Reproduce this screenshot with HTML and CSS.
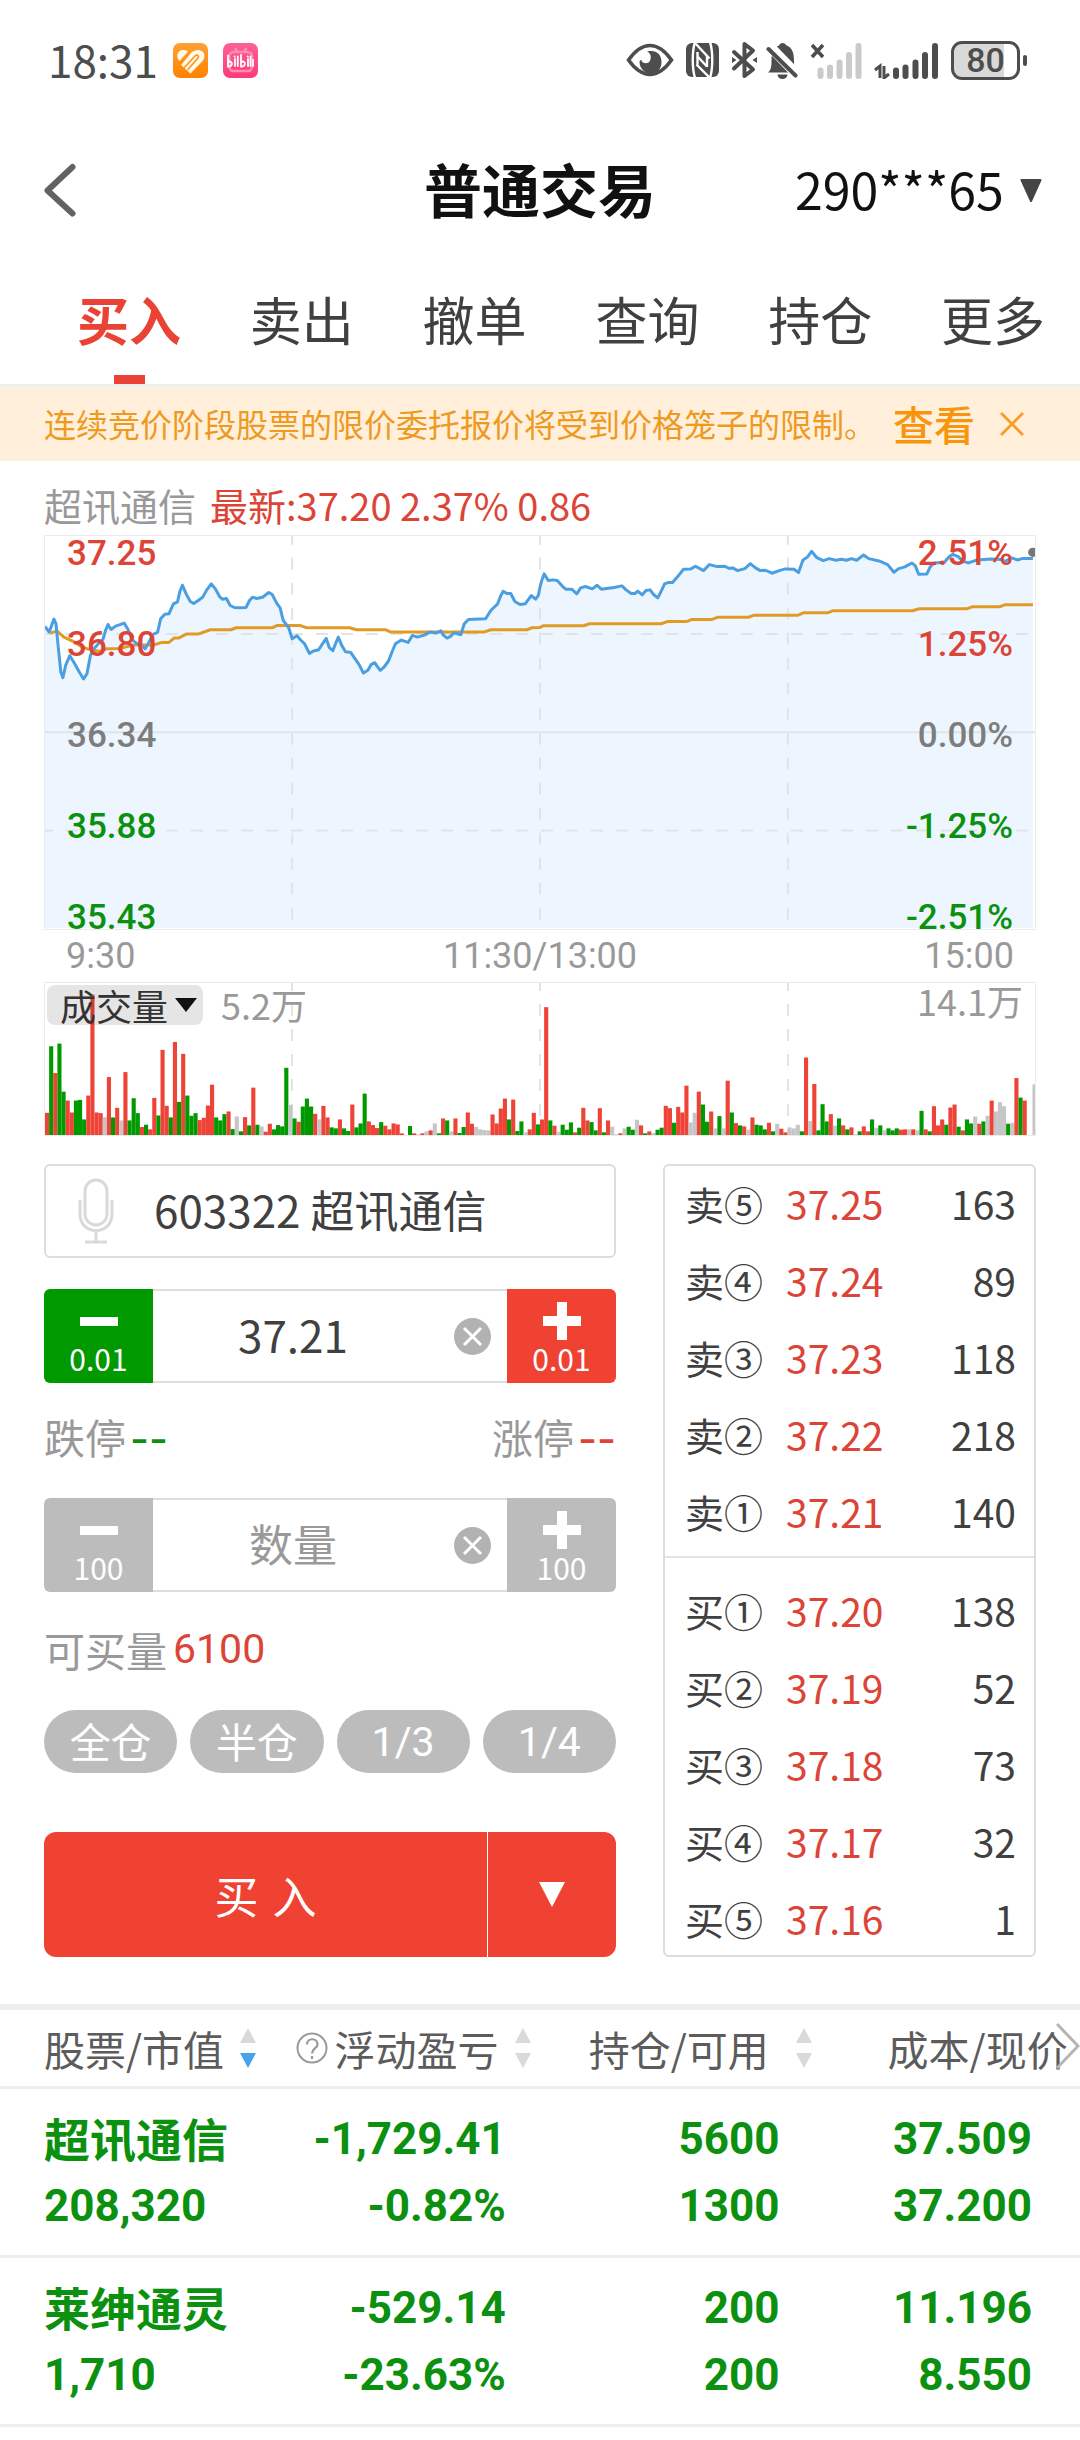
FILE: index.html
```html
<!DOCTYPE html>
<html lang="zh-CN">
<head>
<meta charset="utf-8">
<meta name="viewport" content="width=device-width, initial-scale=1">
<title>普通交易</title>
<link rel="stylesheet" href="styles.css">
</head>
<body>
<div class="statusbar">
  <div class="status-left">
    <time class="clock">18:31</time>
    <svg class="app-icon" viewBox="0 0 35 35" aria-hidden="true">
      <defs><linearGradient id="orange" x1="0" y1="0" x2="0" y2="1"><stop offset="0" stop-color="#ffa033"/><stop offset="1" stop-color="#ff8200"/></linearGradient></defs>
      <rect width="35" height="35" rx="7" fill="url(#orange)"/>
      <path d="M6.500 18C2.500 14 4 7.500 9.500 7C12 6.800 14 7.500 15 8.500Z" fill="#fffbe8"/>
      <path d="M8 22L18.500 9.500C22 6 28 6 30.500 9.500C32 12.500 31.500 15.500 29.500 18L17.500 30.500Z" fill="#fffbe8"/>
      <path d="M10.500 25.500L22 13C24 11 26.500 13 25 15L14.500 27" fill="none" stroke="#ff9418" stroke-width="1.600"/>
    </svg>
    <svg class="app-icon" viewBox="0 0 35 35" aria-hidden="true">
      <defs><linearGradient id="pink" x1="0" y1="0" x2="0" y2="1"><stop offset="0" stop-color="#fc6197"/><stop offset="1" stop-color="#ff3a78"/></linearGradient></defs>
      <rect width="35" height="35" rx="7" fill="url(#pink)"/>
      <g fill="none" stroke="#ff8db2" stroke-width="2.400"><rect x="6.500" y="9" width="22.500" height="19" rx="4"/><path d="M12 5l2.500 4M23.500 5L21 9"/></g>
      <g fill="none" stroke="#fff" stroke-width="1.800" stroke-linecap="round">
        <path d="M5 12.500V23.500C9.500 24 10.500 18.500 6 18.500M12 16v7M14.800 13.500V23M18 12V23.500C22.500 24 23.500 18.500 19 18.500M25 16v7M27.500 13.500V23M30 17v6M11.500 13.500l.2.100M24.700 13.500l.2.100"/>
      </g>
    </svg>
  </div>
  <div class="status-right">
    <svg width="48" height="38" viewBox="0 0 48 38" aria-hidden="true">
      <path d="M2.500 19C10 8.500 17 4.500 24 4.500S38 8.500 45.500 19C38 29.500 31 33.500 24 33.500S10 29.500 2.500 19Z" fill="none" stroke="#4d4d4d" stroke-width="3.600"/>
      <path d="M21 10.500C30 8.500 35.500 13 35.500 21C35.500 28 31 32.500 25 32.500S13.500 28 13.500 20.500C13.500 20 15 18.500 15.500 19C16 23 23 24 24.500 18.500C25.500 14.500 24 12 21 10.500Z" fill="#4d4d4d"/>
    </svg>
    <svg class="icon-nfc" width="33" height="36" viewBox="0 0 33 36" aria-hidden="true">
      <rect y="1" width="33" height="34" rx="6" fill="#4d4d4d"/>
      <g fill="none" stroke="#fff" stroke-width="2.400"><path d="M9 0C6 9 6 26 9 36"/><path d="M24 0C27 9 27 27 24 36"/><path d="M9 1L23.500 16.500M10.500 22.500L23.500 35.500M11.500 10V22.500M21 14V25" /><path d="M11.500 14.500L21 24.500"/></g>
    </svg>
    <svg width="27" height="38" viewBox="0 0 27 38" aria-hidden="true">
      <path d="M3 11L22 28.500L13.500 35V3L22 9.500L3 27.500" fill="none" stroke="#4d4d4d" stroke-width="4" stroke-linejoin="round" stroke-linecap="round"/>
      <path d="M1 16l4.500 3L1 22ZM26 16l-4.500 3L26 22Z" fill="#4d4d4d"/>
    </svg>
    <svg class="icon-bell" width="32" height="38" viewBox="0 0 32 38" aria-hidden="true">
      <path d="M2 31.500C5 29 5.500 26 5.500 20C5.500 9 9 6 13 4.500C14 1 19 1 20.500 4.500C26 6.500 28 11 28 20C28 27 29 29 31 31.500Z" fill="#4d4d4d"/>
      <path d="M11.500 33.500h10a5 4.500 0 0 1-10 0Z" fill="#4d4d4d"/>
      <path d="M0 1.500L31 33.500" stroke="#fff" stroke-width="10"/>
      <path d="M2.500 8L29.500 34.500" stroke="#4d4d4d" stroke-width="4" stroke-linecap="round"/>
    </svg>
    <svg class="icon-nosim" width="52" height="38" viewBox="0 0 52 38" aria-hidden="true">
      <path d="M2 4l11 12M13 4L2 16" stroke="#4d4d4d" stroke-width="3.600"/>
      <path d="M10.500 29.500v5.500M20 26.500v8.500M29.500 21.500v13.500M39 14v21M48.500 5v30" stroke="#cacaca" stroke-width="6" stroke-linecap="round"/>
    </svg>
    <svg class="icon-signal" width="65" height="38" viewBox="0 0 65 38" aria-hidden="true">
      <path d="M1 29l5-4v12M10 25v12l5-4" fill="none" stroke="#4d4d4d" stroke-width="3"/>
      <path d="M22 29.500v5.500M31.500 26.500v8.500M41.500 21.500v13.500M51 14v21M61 5v30" stroke="#4d4d4d" stroke-width="6" stroke-linecap="round"/>
    </svg>
    <div class="battery"><span class="battery-text">80</span></div>
  </div>
</div>

<header class="header">
  <button class="back" type="button" aria-label="返回">
    <svg width="32" height="54" viewBox="0 0 32 54"><path d="M28.500 4L3.500 27.500L28.500 50.500" fill="none" stroke="#626262" stroke-width="6" stroke-linecap="round" stroke-linejoin="round"/></svg>
  </button>
  <h1 class="title">普通交易</h1>
  <div class="account">
    <select class="account-select" aria-label="资金账号"><option>290***65</option></select>
    <svg class="caret" width="22" height="23" viewBox="0 0 22 23" aria-hidden="true"><path d="M1.500 1h19L11 22Z" fill="#444" stroke="#444" stroke-width="2" stroke-linejoin="round"/></svg>
  </div>
</header>

<nav class="tabs">
  <a class="tab tab-active" href="#buy">买入</a>
  <a class="tab" href="#sell">卖出</a>
  <a class="tab" href="#cancel">撤单</a>
  <a class="tab" href="#query">查询</a>
  <a class="tab" href="#hold">持仓</a>
  <a class="tab" href="#more">更多</a>
</nav>

<div class="notice">
  <p class="notice-text">连续竞价阶段股票的限价委托报价将受到价格笼子的限制。</p>
  <a class="notice-link" href="#notice">查看</a>
  <button class="notice-close" type="button" aria-label="关闭">
    <svg width="24" height="24" viewBox="0 0 24 24"><path d="M1 1l22 22M23 1L1 23" stroke="#f6a02a" stroke-width="3"/></svg>
  </button>
</div>

<main>
  <section class="market">
    <p class="quote"><span class="quote-name">超讯通信</span><span class="up">最新:37.20 2.37% 0.86</span></p>

    <div class="price-chart">
      <svg class="plot" viewBox="0 0 2876 1182" preserveAspectRatio="none" aria-label="分时图">
        <g transform="translate(-130 -46)">
          <path id="price-area" fill="#edf6ff"/>
          <g class="grid">
            <path d="M130 636H3006"/>
            <path class="dash" d="M118 341H3006M118 932H3006"/>
            <path class="dash" d="M848 36V1226M1568 36V1226M2288 36V1226"/>
          </g>
          <path id="average-line" class="line" stroke="#e29a26"/>
          <path id="price-line" class="line" stroke="#4b9fe0"/>
          <ellipse cx="3000" cy="95" rx="14" ry="14" fill="#777"/>
        </g>
      </svg>
      <div class="scale">
        <span class="up">37.25</span><span class="up">36.80</span><span class="flat">36.34</span><span class="down">35.88</span><span class="down">35.43</span>
      </div>
      <div class="scale scale-right">
        <span class="up">2.51%</span><span class="up">1.25%</span><span class="flat">0.00%</span><span class="down">-1.25%</span><span class="down">-2.51%</span>
      </div>
    </div>
    <div class="time-axis"><span>9:30</span><span>11:30/13:00</span><span class="time-end">15:00</span></div>

    <div class="volume-chart">
      <div class="volume-head">
        <div class="indicator">
          <select class="indicator-select" aria-label="指标"><option>成交量</option></select>
          <svg class="caret" width="22" height="14" viewBox="0 0 22 14" aria-hidden="true"><path d="M0 0h22L11 14Z" fill="#111"/></svg>
        </div>
        <span class="volume-now">5.2万</span>
        <span class="volume-max">14.1万</span>
      </div>
      <svg class="plot" viewBox="0 0 990 459" preserveAspectRatio="none" aria-label="成交量图">
        <g class="grid"><path class="dash" d="M247 -12V459M495 -12V459M743 -12V459"/></g>
        <g id="volume-bars"></g>
        <path d="M989 306V459" stroke="#c6c6c6" stroke-width="3"/>
      </svg>
    </div>
  </section>

  <div class="trade">
    <form class="order" id="buy">
      <div class="field">
        <svg class="mic" width="36" height="66" viewBox="0 0 36 66" aria-hidden="true"><g fill="none" stroke="#d9d9d9" stroke-width="3"><rect x="7" y="2" width="22" height="45" rx="11"/><path d="M2 22V36C2 58 34 58 34 36V22M18 52V64M7 64H29"/></g></svg>
        <input class="field-input" type="text" aria-label="股票代码" value="603322 超讯通信">
      </div>

      <div class="stepper">
        <button class="step step-down" type="button"><svg width="38" height="38" viewBox="0 0 38 38" aria-hidden="true"><path d="M0 19.500H38" stroke="#fff" stroke-width="9"/></svg>0.01</button>
        <input class="step-input" type="text" aria-label="价格" value="37.21">
        <button class="clear" type="button" aria-label="清除"><svg width="37" height="37" viewBox="0 0 37 37"><circle cx="18.500" cy="18.500" r="18.500" fill="#b2b2b2"/><path d="M10 10l17 17M27 10L10 27" stroke="#fff" stroke-width="3"/></svg></button>
        <button class="step step-up" type="button"><svg width="38" height="38" viewBox="0 0 38 38" aria-hidden="true"><path d="M0 19H38M19 0V38" stroke="#fff" stroke-width="10"/></svg>0.01</button>
      </div>

      <div class="limits">
        <span>跌停<b class="dashes down">--</b></span>
        <span>涨停<b class="dashes up">--</b></span>
      </div>

      <div class="stepper">
        <button class="step" type="button"><svg width="38" height="38" viewBox="0 0 38 38" aria-hidden="true"><path d="M0 19.500H38" stroke="#fff" stroke-width="9"/></svg>100</button>
        <input class="step-input" type="text" aria-label="数量" placeholder="数量">
        <button class="clear" type="button" aria-label="清除"><svg width="37" height="37" viewBox="0 0 37 37"><circle cx="18.500" cy="18.500" r="18.500" fill="#b2b2b2"/><path d="M10 10l17 17M27 10L10 27" stroke="#fff" stroke-width="3"/></svg></button>
        <button class="step" type="button"><svg width="38" height="38" viewBox="0 0 38 38" aria-hidden="true"><path d="M0 19H38M19 0V38" stroke="#fff" stroke-width="10"/></svg>100</button>
      </div>

      <p class="available">可买量<b class="available-num up">6100</b></p>

      <div class="portions">
        <button class="pill" type="button">全仓</button>
        <button class="pill" type="button">半仓</button>
        <button class="pill pill-num" type="button">1/3</button>
        <button class="pill pill-num" type="button">1/4</button>
      </div>

      <div class="submit">
        <button class="submit-main" type="submit">买 入</button>
        <button class="submit-more" type="button" aria-label="更多买入方式"><svg width="26" height="25" viewBox="0 0 26 25"><path d="M0 0H26L13 25Z" fill="#fff"/></svg></button>
      </div>
    </form>

    <section class="book" aria-label="五档行情">
      <ul class="book-side">
        <li><span>卖⑤</span><span class="up">37.25</span><span class="qty">163</span></li>
        <li><span>卖④</span><span class="up">37.24</span><span class="qty">89</span></li>
        <li><span>卖③</span><span class="up">37.23</span><span class="qty">118</span></li>
        <li><span>卖②</span><span class="up">37.22</span><span class="qty">218</span></li>
        <li><span>卖①</span><span class="up">37.21</span><span class="qty">140</span></li>
      </ul>
      <ul class="book-side book-bids">
        <li><span>买①</span><span class="up">37.20</span><span class="qty">138</span></li>
        <li><span>买②</span><span class="up">37.19</span><span class="qty">52</span></li>
        <li><span>买③</span><span class="up">37.18</span><span class="qty">73</span></li>
        <li><span>买④</span><span class="up">37.17</span><span class="qty">32</span></li>
        <li><span>买⑤</span><span class="up">37.16</span><span class="qty">1</span></li>
      </ul>
    </section>
  </div>

  <div class="holdings">
    <table class="table">
      <thead>
        <tr>
          <th class="c1"><div class="head">股票/市值<svg class="sort sort-desc" width="16" height="40" viewBox="0 0 16 40"><path d="M0 15H16L8 0Z"/><path class="desc" d="M0 25H16L8 40Z"/></svg></div></th>
          <th class="c2"><div class="head"><svg class="help" width="32" height="32" viewBox="0 0 32 32"><circle cx="16" cy="16" r="14.500" fill="none" stroke="#999" stroke-width="2"/><path d="M11 12.500C11 5.500 21.500 5.500 21.500 12.500C21.500 16 16 16.500 16 21.500M16 24v3" fill="none" stroke="#999" stroke-width="2.200"/></svg>浮动盈亏<svg class="sort" width="16" height="40" viewBox="0 0 16 40"><path d="M0 15H16L8 0Z"/><path d="M0 25H16L8 40Z"/></svg></div></th>
          <th class="c3"><div class="head">持仓/可用<svg class="sort" width="16" height="40" viewBox="0 0 16 40"><path d="M0 15H16L8 0Z"/><path d="M0 25H16L8 40Z"/></svg></div></th>
          <th class="c4"><div class="head">成本/现价</div></th>
        </tr>
      </thead>
      <tbody>
        <tr>
          <td class="c1"><span class="name">超讯通信</span>208,320</td>
          <td class="c2"><span>-1,729.41</span>-0.82%</td>
          <td class="c3"><span>5600</span>1300</td>
          <td class="c4"><span>37.509</span>37.200</td>
        </tr>
        <tr>
          <td class="c1"><span class="name">莱绅通灵</span>1,710</td>
          <td class="c2"><span>-529.14</span>-23.63%</td>
          <td class="c3"><span>200</span>200</td>
          <td class="c4"><span>11.196</span>8.550</td>
        </tr>
      </tbody>
    </table>
    <svg class="scroll-hint" width="24" height="48" viewBox="0 0 24 48" aria-hidden="true"><path d="M1 2L22 24L1 46" fill="none" stroke="#b5b5b5" stroke-width="3"/></svg>
  </div>
</main>
<script src="chart.js"></script>
</body>
</html>
```
FILE: styles.css
```css
* {
  box-sizing: border-box;
}

body {
  margin: 0;
  min-height: 100vh;
  background: #fff;
  color: #404040;
  font-family: "Noto Sans CJK SC", sans-serif;
  font-size: 41px;
}

h1, p, ul {
  margin: 0;
  padding: 0;
}

button, select, input {
  margin: 0;
  padding: 0;
  border: 0;
  background: none;
  color: inherit;
  font: inherit;
}

select {
  appearance: none;
}

svg {
  display: block;
  flex: none;
}

.up { color: #dc4437; }
.down { color: #0c900f; }
.flat { color: #7d7d7d; }

/* status bar */
.statusbar {
  display: flex;
  justify-content: space-between;
  align-items: center;
  height: 120px;
  padding: 0 60px 0 48px;
  color: #4d4d4d;
}

.status-left,
.status-right {
  display: flex;
  align-items: center;
}

.status-left { gap: 15px; }

.clock {
  padding-bottom: 2px;
  font-size: 44px;
  line-height: 56px;
}

.app-icon {
  width: 35px;
  height: 35px;
}

.status-right { gap: 12px; }
.icon-bell { margin-left: -4px; }

.battery {
  position: relative;
  display: flex;
  align-items: center;
  justify-content: center;
  width: 69px;
  height: 39px;
  border: 3px solid #4d4d4d;
  border-radius: 11px;
  background: linear-gradient(to right, #d9d9d9 50px, #fff 50px);
}

.battery::after {
  content: "";
  position: absolute;
  top: 11px;
  right: -10px;
  width: 4px;
  height: 11px;
  border-radius: 2px;
  background: #4d4d4d;
}

.battery-text {
  font-family: Roboto, sans-serif;
  font-weight: 500;
  font-size: 34px;
  line-height: 34px;
}

/* title bar */
.header {
  display: grid;
  grid-template-columns: 1fr auto 1fr;
  align-items: center;
  height: 140px;
  padding: 0 38px;
  color: #111;
}

.back {
  justify-self: start;
  margin-left: 6px;
}

.title {
  padding-bottom: 4px;
  font-size: 58px;
  font-weight: 700;
  line-height: 80px;
}

.account {
  display: flex;
  align-items: center;
  justify-self: end;
  gap: 16px;
}

.account-select {
  padding-bottom: 4px;
  font-size: 50px;
  line-height: 70px;
}

/* tabs */
.tabs {
  display: flex;
  justify-content: space-between;
  padding: 0 35px 0 77px;
  border-bottom: 3px solid #eee;
}

.tab {
  display: flex;
  flex-direction: column;
  align-items: center;
  height: 124px;
  padding-top: 21px;
  color: #404040;
  font-size: 52px;
  line-height: 76px;
  text-decoration: none;
}

.tab-active {
  color: #ea4235;
  font-weight: 700;
}

.tab-active::after {
  content: "";
  width: 31px;
  height: 9px;
  margin-top: auto;
  background: #ea4235;
}

/* notice strip */
.notice {
  display: flex;
  align-items: center;
  height: 74px;
  padding: 0 56px 0 44px;
  background: #ffefdb;
  color: #ee9a1e;
}

.notice-text {
  padding-bottom: 2px;
  font-size: 32px;
  line-height: 48px;
}

.notice-link {
  margin-left: 17px;
  padding-bottom: 2px;
  color: #f7960d;
  font-size: 41px;
  font-weight: 500;
  line-height: 56px;
  text-decoration: none;
}

.notice-close { margin-left: auto; }

/* charts */
.market { padding: 0 44px; }

.quote {
  display: flex;
  gap: 14px;
  padding: 15px 0 1px;
  font-size: 38px;
  line-height: 58px;
}

.quote-name { color: #999; }

.price-chart,
.volume-chart {
  display: grid;
  grid-template-rows: 100%;
  border: 1px solid #ebebeb;
}

.price-chart { height: 395px; }

.plot {
  grid-area: 1 / 1;
  width: 100%;
  height: 100%;
}

.grid path {
  fill: none;
  stroke: #dfe4e8;
  stroke-width: 2;
  vector-effect: non-scaling-stroke;
}

.grid .dash { stroke-dasharray: 12 13; }

.line {
  fill: none;
  stroke-width: 3;
  stroke-linejoin: round;
  vector-effect: non-scaling-stroke;
}

.scale {
  grid-area: 1 / 1;
  display: flex;
  flex-direction: column;
  justify-self: start;
  gap: 63px;
  padding: 4px 22px 0;
  font-family: Roboto, sans-serif;
  font-weight: 500;
  font-size: 35px;
  line-height: 28px;
}

.scale-right {
  justify-self: end;
  text-align: right;
}

.time-axis {
  display: grid;
  grid-template-columns: 1fr auto 1fr;
  padding: 5px 22px;
  color: #999;
  font-family: Roboto, sans-serif;
  font-size: 36px;
  line-height: 42px;
}

.time-end { text-align: right; }

.volume-chart { height: 154px; }

.volume-head {
  grid-area: 1 / 1;
  z-index: 1;
  display: flex;
  align-items: flex-start;
  justify-content: space-between;
  padding: 2px 12px 0 2px;
  color: #999;
  font-size: 36px;
  line-height: 38px;
}

.indicator {
  display: flex;
  align-items: center;
  gap: 6px;
  height: 40px;
  padding: 0 6px 0 13px;
  border-radius: 8px;
  background: rgba(0, 0, 0, 0.1);
  color: #333;
}

.volume-now { margin: 0 auto 0 18px; }
.volume-max { line-height: 30px; }

/* order entry */
.trade {
  display: grid;
  grid-template-columns: 572fr 373fr;
  gap: 47px;
  padding: 28px 44px 47px;
}

.order { min-width: 0; }

.field {
  display: flex;
  align-items: center;
  gap: 40px;
  height: 94px;
  margin-bottom: 31px;
  padding: 0 32px;
  border: 2px solid #ddd;
  border-radius: 6px;
}

.field-input {
  flex: 1;
  min-width: 0;
  height: 80px;
  padding-bottom: 5px;
  font-size: 44px;
}

.stepper {
  display: flex;
  height: 94px;
  overflow: hidden;
  border-radius: 6px;
}

.step {
  display: flex;
  flex: none;
  flex-direction: column;
  align-items: center;
  justify-content: flex-start;
  width: 109px;
  padding-top: 13px;
  background: #bcbcbc;
  color: #fff;
  font-size: 30px;
  line-height: 36px;
}

.step-down { background: #090; }
.step-up { background: #ef4233; }

.step-input,
.clear {
  border: solid #ddd;
  border-width: 2px 0;
}

.step-input {
  flex: 1;
  min-width: 0;
  padding-bottom: 5px;
  font-size: 44px;
  text-align: center;
}

.step-input::placeholder {
  color: #999;
  opacity: 1;
}

.clear {
  display: flex;
  align-items: center;
  flex: none;
  width: 74px;
  padding-left: 21px;
}

.limits {
  display: flex;
  align-items: center;
  justify-content: space-between;
  height: 115px;
  padding-bottom: 6px;
  color: #999;
  line-height: 58px;
}

.dashes {
  margin-left: 4px;
  font-family: Inter, sans-serif;
  font-weight: 500;
}

.available {
  display: flex;
  align-items: center;
  height: 118px;
  padding-bottom: 4px;
  color: #999;
  line-height: 58px;
}

.available-num {
  margin-left: 6px;
  font-family: Roboto, sans-serif;
  font-weight: 400;
}

.portions {
  display: grid;
  grid-template-columns: repeat(4, 1fr);
  gap: 13px;
}

.pill {
  height: 63px;
  padding-bottom: 3px;
  border-radius: 32px;
  background: #bcbcbc;
  color: #fff;
  line-height: 60px;
}

.pill-num {
  padding-bottom: 0;
  font-family: Roboto, sans-serif;
}

.submit {
  display: flex;
  gap: 1px;
  height: 125px;
  margin-top: 59px;
  overflow: hidden;
  border-radius: 12px;
}

.submit-main,
.submit-more {
  background: #ef4233;
  color: #fff;
}

.submit-main {
  flex: 1;
  font-family: "DejaVu Sans", "Noto Sans CJK SC", sans-serif;
  font-size: 44px;
}

.submit-more {
  display: flex;
  align-items: center;
  justify-content: center;
  width: 128px;
}

/* order book */
.book {
  border: 2px solid #ddd;
  border-radius: 6px;
}

.book-side {
  display: flex;
  flex-direction: column;
  gap: 21px;
  padding: 9px 18px 17px 20px;
  list-style: none;
}

.book-side li {
  display: grid;
  grid-template-columns: 101px auto 1fr;
  font-size: 39px;
  line-height: 56px;
}

.book-bids {
  padding: 24px 18px 0 20px;
  border-top: 2px solid #e3e3e3;
}

.qty { text-align: right; }

/* positions */
.holdings {
  position: relative;
  overflow: hidden;
  border-top: 6px solid #eee;
}

.table {
  width: 100%;
  border-collapse: collapse;
  table-layout: fixed;
}

.table tr { border-bottom: 3px solid #eee; }

.table th {
  height: 77px;
  padding: 0;
  color: #5c5c5c;
  font-weight: 400;
  line-height: 58px;
  white-space: nowrap;
}

.head {
  display: flex;
  align-items: center;
}

.sort {
  margin-left: 16px;
  fill: #d9d9d9;
}

.sort-desc .desc { fill: #46a3ee; }
.help { margin-right: 7px; }

.table td {
  padding-top: 17px;
  padding-bottom: 15px;
  color: #0c900f;
  font-family: Roboto, sans-serif;
  font-size: 44px;
  font-weight: 700;
  line-height: 67px;
  text-align: right;
}

.table td span { display: block; }

.table .name {
  height: 67px;
  font-family: "Noto Sans CJK SC", sans-serif;
  font-size: 46px;
  line-height: 62px;
}

.table .c1 {
  width: 27%;
  padding-left: 44px;
  text-align: left;
}

.c2 { width: 24%; }
.c3 { width: 26%; }
.c4 { width: 23%; }

.table th.c2 { padding-left: 4px; }
.table th.c3 { padding-left: 38px; }
.table th.c4 { padding-left: 56px; }
.table th.c3 .sort { margin-left: 27px; }
.table td.c2 { padding-right: 45px; }
.table td.c3 { padding-right: 52px; }
.table td.c4 { padding-right: 48px; }

.scroll-hint {
  position: absolute;
  top: 12px;
  right: 0;
}
```
FILE: chart.js
```js
// Intraday price and average price, as x,y pairs in plot units.
const price = "130,318 142,335 156,296 162,310 168,375 176,455 182,472 190,435 202,406 215,428 230,456 242,476 252,460 262,405 272,385 285,370 298,358 306,330 313,312 322,327 335,317 350,312 360,308 370,325 385,360 400,372 410,374 421,385 432,365 445,341 457,336 466,295 478,281 490,280 503,250 515,244 522,212 529,194 540,220 552,243 562,249 575,240 588,230 600,208 613,190 625,205 637,228 645,236 657,234 668,255 680,261 694,262 714,261 724,240 733,230 745,234 762,230 780,216 790,222 803,248 813,262 822,300 838,322 848,355 862,346 872,358 884,370 898,399 910,392 925,388 935,372 947,354 956,382 966,391 974,370 982,350 992,375 1003,394 1018,396 1030,414 1042,432 1055,458 1068,450 1078,432 1088,427 1095,438 1104,450 1115,440 1128,422 1138,395 1148,370 1165,359 1185,366 1197,345 1212,350 1232,344 1248,335 1265,338 1280,331 1288,345 1298,353 1308,348 1318,337 1338,343 1348,310 1360,297 1410,295 1425,270 1445,250 1453,228 1461,212 1472,219 1483,219 1495,243 1510,252 1525,250 1543,225 1555,236 1563,225 1568,200 1573,180 1580,160 1592,180 1606,178 1618,180 1634,198 1643,206 1660,206 1675,220 1686,202 1700,198 1720,205 1734,194 1746,206 1783,201 1806,196 1818,208 1833,219 1844,219 1852,212 1865,223 1876,210 1888,208 1898,222 1910,232 1920,212 1930,190 1940,186 1953,186 1968,168 1985,146 2006,145 2020,137 2043,150 2060,132 2083,138 2105,137 2116,143 2128,142 2142,150 2163,144 2179,129 2193,141 2208,150 2223,149 2242,158 2263,150 2280,145 2306,146 2319,156 2332,118 2344,110 2357,92 2371,110 2391,120 2408,114 2428,119 2443,116 2458,119 2473,114 2488,119 2508,103 2523,114 2553,121 2578,132 2596,155 2610,144 2628,139 2648,127 2658,135 2668,161 2692,160 2702,138 2713,127 2743,125 2755,110 2767,101 2783,108 2796,122 2813,127 2838,118 2878,115 2908,117 2920,122 2938,112 2955,118 2968,114 3000,114";
const average = "145,338 165,332 185,350 210,362 235,378 255,386 290,393 310,385 350,384 385,374 445,374 470,366 490,366 505,353 518,353 540,341 575,341 610,328 670,328 685,322 790,322 805,315 870,315 890,322 1015,322 1035,328 1120,328 1135,335 1405,335 1425,328 1530,328 1545,322 1568,321 1577,316 1695,316 1712,310 1920,310 1940,303 1995,303 2010,297 2068,297 2085,290 2175,290 2190,284 2318,284 2333,277 2403,277 2418,271 2650,271 2670,265 2808,265 2823,259 2903,259 2918,253 3000,253";

// One entry per minute: r = up, g = down, n = unchanged, then the bar height.
const volume = "r67 g268 r187 g276 g131 r104 r68 g104 g106 g47 r119 r424 r68 r66 n54 r175 g53 r82 n44 r190 g44 g111 g66 r24 g31 r17 r112 g59 r257 r88 g53 r281 g100 r245 g119 g58 g66 r45 r52 r89 r152 g53 g44 g63 r71 g18 n56 g11 r54 g29 r143 g31 n26 r10 r34 g17 g30 g26 g203 n91 g50 r40 g86 g110 g86 r64 n47 r88 r53 g23 g20 r47 g20 g12 r92 g23 g35 g125 r41 r30 r21 g39 r28 r17 r35 r32 r5 n0 g27 r5 n2 r5 n11 r14 n35 g5 r50 g44 n11 r50 g6 g24 r68 r34 n24 n17 n15 n14 r62 r35 r80 r110 g47 r107 g12 g41 n8 r17 r67 g32 r47 r386 g44 r28 n10 g31 g16 g38 r8 g22 r82 r44 g39 g14 r81 g8 r44 n25 n2 r5 n20 g25 g16 n46 r29 g5 r11 n6 g16 g22 r88 r81 g37 r85 r68 r149 n38 n67 r131 g92 g40 r71 n20 g57 n20 r164 g68 r36 g29 r26 n16 r53 g31 g29 g17 r37 g11 n34 r19 r8 n23 n20 n31 g11 r234 n42 r154 g14 g93 g41 r63 n28 g50 r29 g17 r23 n2 g11 r26 r11 g47 n22 g29 n14 g20 g14 g20 r16 r17 n17 r17 n14 g73 r17 g11 r87 r29 r47 g31 r83 r92 g25 r14 g47 g35 n56 r34 g41 n58 r104 n71 n99 n87 g34 n37 r172 g113 r104";

const colors = { r: "#ee4437", g: "#090", n: "#c6c6c6" };
const SVG = "http://www.w3.org/2000/svg";

document.getElementById("price-line").setAttribute("d", "M" + price);
document.getElementById("average-line").setAttribute("d", "M" + average);
document.getElementById("price-area").setAttribute("d", "M" + price + " 3000,1226 130,1226Z");

const bars = document.getElementById("volume-bars");
const step = 990 / 240;
volume.split(" ").forEach((entry, i) => {
  const height = Number(entry.slice(1));
  const bar = document.createElementNS(SVG, "rect");
  bar.setAttribute("x", i * step);
  bar.setAttribute("y", 459 - height);
  bar.setAttribute("width", step);
  bar.setAttribute("height", height);
  bar.setAttribute("fill", colors[entry[0]]);
  bars.appendChild(bar);
});
```
